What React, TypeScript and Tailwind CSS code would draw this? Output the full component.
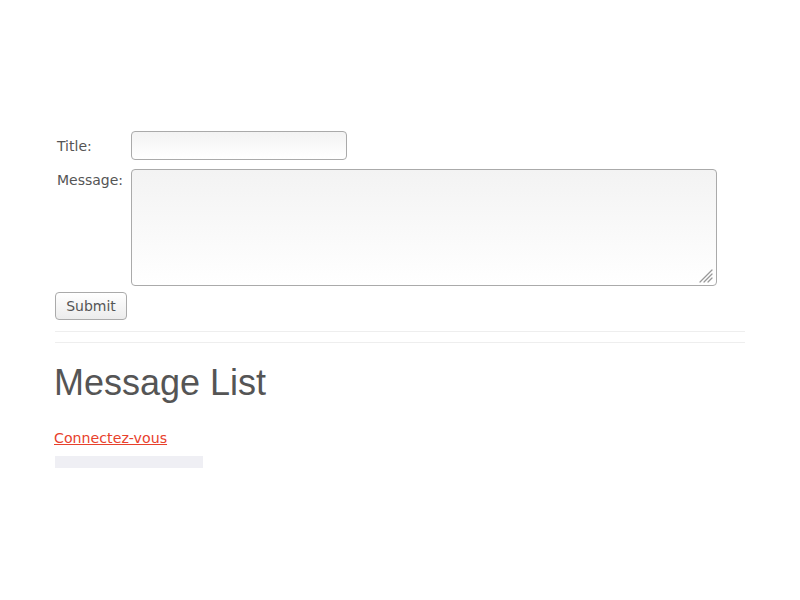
export default function App() {
  return (
    <div className="min-h-[600px] bg-white px-[55px] pt-[131px] font-['DejaVu_Sans',sans-serif] text-[14px] text-[#555]">
      <form onSubmit={(e) => e.preventDefault()}>
        <div className="flex items-center">
          <label className="w-[76px] pl-[2px] pt-[2px]">Title:</label>
          <input
            type="text"
            className="h-[29px] w-[216px] rounded-[4px] border border-[#aaa] bg-gradient-to-b from-[#f3f3f3] to-white px-2 outline-none"
          />
        </div>
        <div className="mt-[9px] flex items-start">
          <label className="w-[76px] pl-[2px] pt-[1px]">Message:</label>
          <div className="relative">
            <textarea className="block h-[117px] w-[586px] resize-none rounded-[4px] border border-[#aaa] bg-gradient-to-b from-[#f3f3f3] to-white p-2 outline-none" />
            {/* resize grip */}
            <svg className="pointer-events-none absolute bottom-[3px] right-[4px]" width="14" height="14" viewBox="0 0 14 14">
              <g stroke="#999" strokeWidth="1.2" strokeLinecap="round">
                <line x1="13" y1="1" x2="1" y2="13" />
                <line x1="13" y1="5" x2="5" y2="13" />
                <line x1="13" y1="9" x2="9" y2="13" />
              </g>
            </svg>
          </div>
        </div>
        <button
          type="submit"
          className="mt-[6px] h-[28px] w-[72px] rounded-[4px] border border-[#aaa] bg-gradient-to-b from-white to-[#ececec] text-[14px] text-[#555]"
        >
          Submit
        </button>
      </form>
      <hr className="mt-[11px] border-t border-[#eee]" />
      <hr className="mt-[10px] border-t border-[#eee]" />
      <h2 className="ml-[-1px] mt-[20px] font-['Liberation_Sans',Arial,sans-serif] text-[36px] leading-[40px] text-[#555]">
        Message List
      </h2>
      <a href="#" className="ml-[-1px] mt-[25px] block w-fit text-[14.2px] leading-[20px] text-[#e8412c] underline">
        Connectez-vous
      </a>
      <div className="mt-[8px] h-[12px] w-[148px] bg-[#efeff4]" />
    </div>
  )
}
